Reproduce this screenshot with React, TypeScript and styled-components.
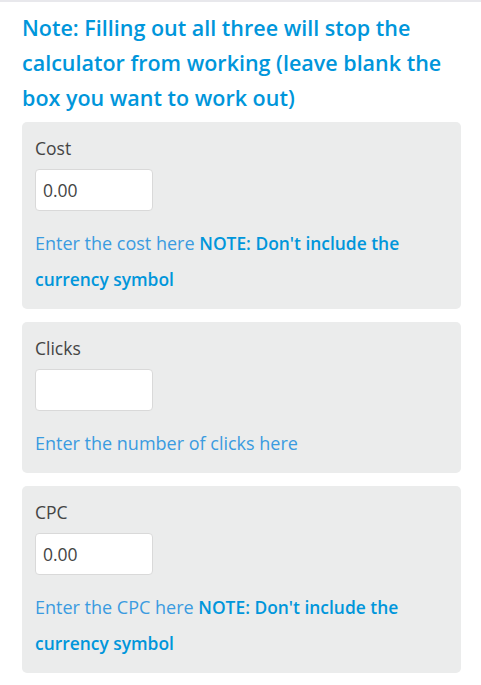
import styled, { createGlobalStyle } from "styled-components";

const GlobalStyle = createGlobalStyle`
  body {
    margin: 0;
    background: #fff;
    font-family: "Open Sans", "Liberation Sans", sans-serif;
  }
`;

const Page = styled.div`
  border-top: 2px solid #e8e8ec;
  padding: 0 20px 0 22px;
`;

const Notice = styled.h2`
  margin: 0 0 7px;
  padding-top: 8px;
  font-size: 21.5px;
  font-weight: 600;
  line-height: 35px;
  color: #0096db;
`;

const Stack = styled.div`
  display: flex;
  flex-direction: column;
  gap: 13px;
`;

const Card = styled.div`
  background: #ebecec;
  border-radius: 5px;
  padding: 14px 13px 12px;
`;

const Label = styled.label`
  display: block;
  font-size: 17.5px;
  line-height: 24px;
  color: #444;
  margin-bottom: 9px;
`;

const Field = styled.input`
  display: block;
  box-sizing: border-box;
  width: 118px;
  height: 42px;
  padding: 0 7px;
  border: 1px solid #d9d9d9;
  border-radius: 4px;
  background: #fff;
  font-family: "Open Sans", "Liberation Sans", sans-serif;
  font-size: 17.5px;
  color: #444;
  outline: none;
`;

const Help = styled.p`
  margin: 14px 0 0;
  font-size: 18px;
  line-height: 36px;
  color: #3a9be0;
`;

const Strong = styled.b`
  font-size: 17.4px;
  font-weight: 600;
  color: #0096db;
`;

const fields = [
  { name: "Cost", value: "0.00", help: "Enter the cost here", note: true },
  { name: "Clicks", value: "", help: "Enter the number of clicks here", note: false },
  { name: "CPC", value: "0.00", help: "Enter the CPC here", note: true },
];

export default function App() {
  return (
    <Page>
      <GlobalStyle />
      <Notice>
        Note: Filling out all three will stop the calculator from working (leave blank the box you want to work out)
      </Notice>
      <Stack>
        {fields.map((f) => (
          <Card key={f.name}>
            <Label>{f.name}</Label>
            <Field defaultValue={f.value} />
            <Help>
              {f.help}
              {f.note && <> <Strong>NOTE: Don't include the currency symbol</Strong></>}
            </Help>
          </Card>
        ))}
      </Stack>
    </Page>
  );
}
